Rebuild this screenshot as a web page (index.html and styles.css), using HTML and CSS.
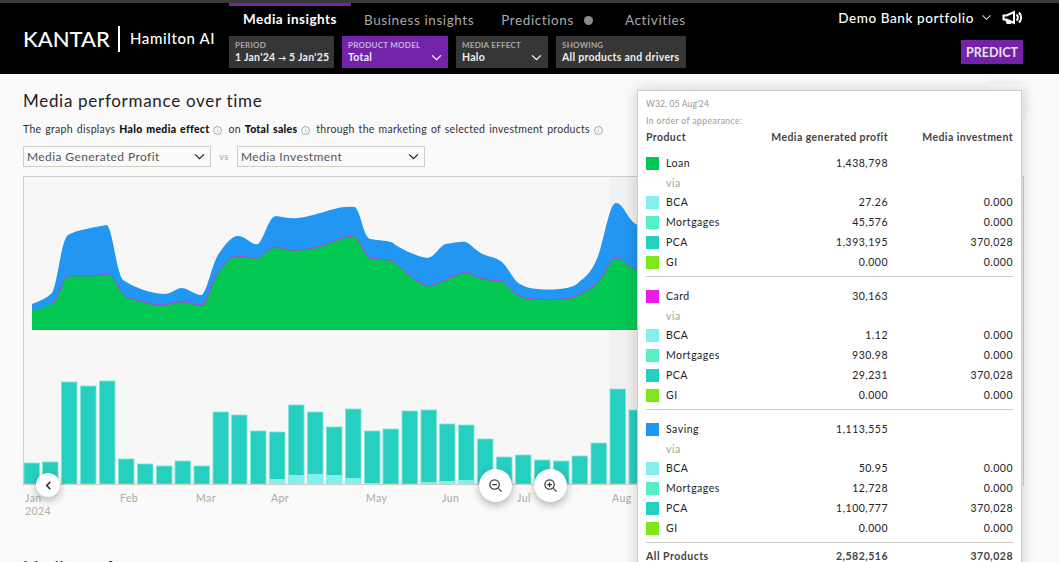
FILE: index.html
```html
<!DOCTYPE html>
<html lang="en">
<head>
<meta charset="utf-8">
<title>Hamilton AI</title>
<link rel="stylesheet" href="styles.css">
</head>
<body>
<header class="topbar">
  <div class="brand"><span class="kantar">KANTAR</span><span class="product">Hamilton AI</span></div>
  <div class="navcol">
    <nav class="tabs">
      <a class="tab active">Media insights</a>
      <a class="tab">Business insights</a>
      <a class="tab">Predictions<i class="dot"></i></a>
      <a class="tab">Activities</a>
    </nav>
    <div class="filters">
      <div class="filter f-period"><small>PERIOD</small><b>1 Jan'24 <span class="arrow">→</span> 5 Jan'25</b></div>
      <div class="filter f-model purple"><small>PRODUCT MODEL</small><b>Total</b><svg class="chev" viewBox="0 0 12 8"><path d="M1 1.5 6 6.5 11 1.5"/></svg></div>
      <div class="filter f-effect"><small>MEDIA EFFECT</small><b>Halo</b><svg class="chev" viewBox="0 0 12 8"><path d="M1 1.5 6 6.5 11 1.5"/></svg></div>
      <div class="filter f-show"><small>SHOWING</small><b>All products and drivers</b></div>
    </div>
  </div>
  <div class="rightcol">
    <div class="portfolio"><span>Demo Bank portfolio</span>
      <svg class="pchev" viewBox="0 0 12 8"><path d="M1.5 1.5 6 6 10.5 1.5"/></svg>
      <svg class="horn" viewBox="0 0 21 14"><path d="M1.500 5h3L12 1.500v11L4.500 9h-3z"/><path d="M4 9l1.500 3.500h2.500L7 10"/><path d="M14.500 4a4 4 0 0 1 0 6M17 2a7 7 0 0 1 0 10"/></svg>
    </div>
    <button class="predict">PREDICT</button>
  </div>
</header>

<main class="page">
  <h1>Media performance over time</h1>
  <p class="desc">The graph displays <b>Halo media effect</b><i class="info">i</i> on <b>Total sales</b><i class="info">i</i> through the marketing of selected investment products<i class="info">i</i></p>
  <div class="selects">
    <div class="select s1">Media Generated Profit<svg class="chev dark" viewBox="0 0 12 8"><path d="M1 1.5 6 6.5 11 1.5"/></svg></div>
    <span class="vs">vs</span>
    <div class="select s2">Media Investment<svg class="chev dark" viewBox="0 0 12 8"><path d="M1 1.5 6 6.5 11 1.5"/></svg></div>
  </div>

  <section class="chart">
    <svg class="plot" viewBox="23 176 1000 345" width="1000" height="345">
      <rect class="band" x="610" y="177" width="30" height="307"/>
      <path class="blue" d="M32 304C40 301 47 298 52 293C58 282 61 240 68 235C76 230 95 227 107 225C113 230 116 272 123 280C133 287 152 294 165 294C173 293 176 288 182 288C190 289 196 296 202 295C208 290 212 262 220 252C226 243 232 236 238 236C246 236 252 246 258 244C264 240 268 217 276 216C284 217 290 219 298 218C308 217 320 213 330 210C340 207 348 206 355 207C361 212 363 236 370 239C380 241 388 240 393 243C400 249 418 257 428 258C436 256 440 245 446 244C454 243 460 241 466 242C472 245 478 253 485 255C491 257 497 258 502 262C510 270 514 282 522 285C530 290 548 290 560 289C570 288 576 286 580 281C590 275 596 263 600 250C606 230 610 203 616 203C624 203 628 222 638 225L638 330L32 330Z"/>
      <path class="green" d="M32 310C40 309 47 307 52 303C60 297 62 277 68 276C76 275 98 277 108 274C116 277 120 293 126 297C136 300 155 306 165 305C172 304 176 301 182 302C190 302 196 306 202 305C208 302 212 280 220 270C226 262 230 256 238 256C246 256 252 259 258 258C264 255 270 247 276 247C284 248 290 251 298 250C310 250 320 246 330 243C338 239 348 236 355 236C361 240 364 256 370 258C380 260 388 259 393 261C400 266 418 285 428 286C436 286 450 276 466 272C472 274 478 279 485 279C491 281 497 280 502 281C508 285 514 295 522 297C530 300 550 300 565 299C575 298 590 290 600 280C606 272 610 258 616 258C624 258 628 268 638 269L638 330L32 330Z"/>
      <path class="mag" d="M52 303C60 297 62 277 68 276C76 275 98 277 108 274C116 277 120 293 126 297C136 300 155 306 165 305C172 304 176 301 182 302C190 302 196 306 202 305C208 302 212 280 220 270C226 262 230 256 238 256C246 256 252 259 258 258C264 255 270 247 276 247C284 248 290 251 298 250C310 250 320 246 330 243C338 239 348 236 355 236C361 240 364 256 370 258C380 260 388 259 393 261C400 266 418 285 428 286C436 286 450 276 466 272C472 274 478 279 485 279C491 281 497 280 502 281C508 285 514 295 522 297C530 300 550 300 565 299C575 298 590 290 600 280C606 272 610 258 616 258C624 258 628 268 638 269"/>
      <g class="bars">
        <rect x="24" y="463" width="15.5" height="21"/><rect x="42.5" y="462" width="15.5" height="22"/><rect x="61.5" y="382" width="15.5" height="102"/><rect x="80.5" y="386" width="15.5" height="98"/><rect x="99.5" y="381" width="15.5" height="103"/><rect x="118.5" y="459" width="15.5" height="25"/><rect x="137.5" y="464" width="15.5" height="20"/><rect x="156.5" y="466" width="15.5" height="18"/><rect x="175" y="461" width="15.5" height="23"/><rect x="194" y="466" width="15.5" height="18"/><rect x="213" y="412" width="15.5" height="72"/><rect x="231.5" y="415" width="15.5" height="69"/><rect x="250.5" y="431" width="15.5" height="53"/><rect x="269.5" y="432" width="15.5" height="52"/><rect x="288.5" y="405" width="15.5" height="79"/><rect x="307.5" y="412" width="15.5" height="72"/><rect x="326.5" y="427" width="15.5" height="57"/><rect x="345.5" y="409" width="15.5" height="75"/><rect x="364.5" y="431" width="15.5" height="53"/><rect x="383" y="429" width="15.5" height="55"/><rect x="402" y="411" width="15.5" height="73"/><rect x="421" y="410" width="15.5" height="74"/><rect x="439.5" y="424" width="15.5" height="60"/><rect x="458.5" y="425" width="15.5" height="59"/><rect x="477.5" y="439" width="15.5" height="45"/><rect x="496.5" y="457" width="15.5" height="27"/><rect x="515.5" y="455" width="15.5" height="29"/><rect x="534.5" y="460" width="15.5" height="24"/><rect x="553.5" y="461" width="15.5" height="23"/><rect x="572" y="456" width="15.5" height="28"/><rect x="591" y="443" width="15.5" height="41"/><rect x="610" y="389" width="15.5" height="95"/><rect x="629" y="410" width="15.5" height="74"/>
      </g>
      <g class="lights">
        <rect x="269.5" y="479" width="15.5" height="5"/><rect x="288.5" y="475" width="15.5" height="9"/><rect x="307.5" y="474" width="15.5" height="10"/><rect x="326.5" y="475" width="15.5" height="9"/><rect x="345.5" y="478" width="15.5" height="6"/><rect x="364.5" y="483" width="15.5" height="1"/><rect x="421" y="482" width="15.5" height="2"/><rect x="439.5" y="481" width="15.5" height="3"/><rect x="458.5" y="480" width="15.5" height="4"/>
      </g>
      <line class="axis" x1="23" y1="484.5" x2="1022" y2="484.5"/>
      <g class="months">
        <text x="25" y="502">Jan</text><text x="25" y="515">2024</text><text x="120" y="502">Feb</text><text x="196" y="502">Mar</text><text x="271" y="502">Apr</text><text x="366" y="502">May</text><text x="442" y="502">Jun</text><text x="517" y="502">Jul</text><text x="612" y="502">Aug</text>
      </g>
    </svg>
    <button class="round r-back"><svg viewBox="0 0 10 12"><path d="M7 2 3 6l4 4"/></svg></button>
    <button class="round r-out"><svg viewBox="0 0 16 16"><circle cx="7" cy="7" r="5"/><path d="M4.500 7h5M11 11l3.500 3.500"/></svg></button>
    <button class="round r-in"><svg viewBox="0 0 16 16"><circle cx="7" cy="7" r="5"/><path d="M4.500 7h5M7 4.500v5M11 11l3.500 3.500"/></svg></button>
  </section>

  <h2 class="next">Media performance</h2>
</main>

<div class="ghost"></div>

<aside class="tip">
  <div class="tip-date">W32, 05 Aug'24</div>
  <div class="tip-note">In order of appearance:</div>
  <div class="row head"><span class="name">Product</span><span>Media generated profit</span><span>Media investment</span></div>

  <div class="group">
    <div class="row parent"><span class="name"><i class="sw loan"></i>Loan</span><span>1,438,798</span><span></span></div>
    <div class="via">via</div>
    <div class="row"><span class="name"><i class="sw bca"></i>BCA</span><span>27.26</span><span>0.000</span></div>
    <div class="row"><span class="name"><i class="sw mort"></i>Mortgages</span><span>45,576</span><span>0.000</span></div>
    <div class="row"><span class="name"><i class="sw pca"></i>PCA</span><span>1,393,195</span><span>370,028</span></div>
    <div class="row"><span class="name"><i class="sw gi"></i>GI</span><span>0.000</span><span>0.000</span></div>
  </div>
  <div class="group">
    <div class="row parent"><span class="name"><i class="sw card"></i>Card</span><span>30,163</span><span></span></div>
    <div class="via">via</div>
    <div class="row"><span class="name"><i class="sw bca"></i>BCA</span><span>1.12</span><span>0.000</span></div>
    <div class="row"><span class="name"><i class="sw mort"></i>Mortgages</span><span>930.98</span><span>0.000</span></div>
    <div class="row"><span class="name"><i class="sw pca"></i>PCA</span><span>29,231</span><span>370,028</span></div>
    <div class="row"><span class="name"><i class="sw gi"></i>GI</span><span>0.000</span><span>0.000</span></div>
  </div>
  <div class="group">
    <div class="row parent"><span class="name"><i class="sw saving"></i>Saving</span><span>1,113,555</span><span></span></div>
    <div class="via">via</div>
    <div class="row"><span class="name"><i class="sw bca"></i>BCA</span><span>50.95</span><span>0.000</span></div>
    <div class="row"><span class="name"><i class="sw mort"></i>Mortgages</span><span>12,728</span><span>0.000</span></div>
    <div class="row"><span class="name"><i class="sw pca"></i>PCA</span><span>1,100,777</span><span>370,028</span></div>
    <div class="row"><span class="name"><i class="sw gi"></i>GI</span><span>0.000</span><span>0.000</span></div>
  </div>
  <div class="row total"><span class="name">All Products</span><span>2,582,516</span><span>370,028</span></div>
</aside>
</body>
</html>
```
FILE: styles.css
```css
* { box-sizing: border-box; }
html, body { margin: 0; height: 100%; overflow: hidden; }
body { background: #fafafa; font-family: "Lato", "Open Sans", sans-serif; color: #222; position: relative; }

.topbar { height: 74px; background: #000; border-top: 3px solid #3a3a3a; display: flex; color: #fff; }
.brand { width: 229px; padding: 22px 0 0 23px; display: flex; align-items: flex-start; }
.kantar { font-size: 22px; line-height: 26px; letter-spacing: 0; font-weight: 500; width: 97px; margin-top: 1px; height: 26px; border-right: 2px solid #fff; }
.product { font-size: 15px; line-height: 26px; padding-left: 10px; letter-spacing: 0.6px; font-weight: 500; }

.navcol { width: 600px; }
.tabs { display: flex; height: 33px; }
.tab { font-size: 13.5px; letter-spacing: 0.6px; color: #a9a9a9; padding: 1px 0 0; line-height: 20px; margin-left: 13px; display: flex; align-items: center; height: 33px; }
.tab.active { color: #fff; font-weight: 700; width: 122px; margin-left: 0; justify-content: center; border-top: 3px solid #7323a8; padding-top: 0; padding-bottom: 4px; letter-spacing: .5px; }
.tab:nth-child(3) { margin-left: 27px; }
.dot { width: 9px; height: 9px; border-radius: 50%; background: #8a8a8a; margin-left: 10px; }
.tab:last-child { margin-left: 32px; }

.filters { display: flex; gap: 8px; }
.filter { position: relative; height: 32px; background: #363636; padding: 4px 6px 0 6px; display: flex; flex-direction: column; }
.filter small { font-size: 8px; line-height: 11px; font-weight: 700; color: #a8a8a8; letter-spacing: 0.25px; }
.filter b { font-size: 10.5px; line-height: 13px; font-weight: 700; color: #eee; letter-spacing: 0.28px; white-space: nowrap; }
.arrow { font-size: 8px; letter-spacing: 0; }
.f-period { width: 105px; }
.f-model { width: 106px; }
.f-effect { width: 92px; }
.f-show { width: 130px; }
.purple { background: #7323a8; }
.purple small { color: #cdb0e2; }
.chev { position: absolute; right: 6px; bottom: 7px; width: 11px; height: 7px; fill: none; stroke: #fff; stroke-width: 1.4; }
.chev.dark { stroke: #222; right: 5px; bottom: 6px; }

.rightcol { flex: 1; padding-right: 36px; display: flex; flex-direction: column; align-items: flex-end; }
.portfolio { display: flex; align-items: center; height: 29px; font-size: 13.5px; letter-spacing: 0.6px; font-weight: 500; }
.pchev { width: 11px; height: 7px; margin-left: 7px; margin-right: 2px; fill: none; stroke: #ddd; stroke-width: 1.2; }
.horn { width: 21px; height: 15px; margin-left: 8px; fill: none; stroke: #fff; stroke-width: 2; }
.predict { margin-top: 8px; width: 62px; height: 24px; border: 0; padding: 0; background: #7323a8; color: #e8e0ee; font: 700 12.5px "Lato", sans-serif; }

.page { padding: 16px 0 0 23px; }
h1 { margin: 0; font-size: 17px; line-height: 22px; font-weight: 400; letter-spacing: 0.7px; color: #222; }
.desc { margin: 10px 0 0; font-size: 10.5px; line-height: 14px; letter-spacing: 0.28px; color: #333; word-spacing: 1px; }
.desc b { color: #111; font-weight: 900; }
.info { display: inline-block; width: 9px; height: 9px; margin: 0 2px 0 4px; border: 1px solid #a9a99f; border-radius: 50%; font-size: 6px; line-height: 7px; text-align: center; color: #a9a99f; font-style: normal; }
.selects { display: flex; align-items: center; margin-top: 10px; height: 21px; }
.select { position: relative; height: 21px; background: #fafafa; border: 1px solid #d0cfc4; font-size: 12px; line-height: 19px; padding-left: 3px; letter-spacing: 0.4px; color: #555; }
.s1 { width: 188px; }
.s2 { width: 188px; }
.vs { width: 26px; text-align: center; font-size: 9px; color: #a3a397; letter-spacing: 0.4px; }

.chart { position: relative; margin-top: 9px; width: 1000px; height: 345px; }
.plot { display: block; }
.chart::before { content: ""; position: absolute; left: 0; top: 0; width: 999px; height: 309px; background: #f7f7f7; border: 1px solid #d0cfc4; border-bottom: 0; z-index: -1; }
.band { fill: #000; opacity: .025; }
.blue { fill: #2196f3; }
.green { fill: #02c853; }
.mag { fill: none; stroke: #e81ee6; stroke-width: 1; opacity: .85; }
.bars rect { fill: #27cfc0; stroke: #7fe6da; stroke-width: .8; }
.lights rect { fill: #85efed; }
.axis { stroke: #d0cfc4; stroke-width: 1; }
.months text { font-size: 10.5px; font-weight: 500; fill: #b0b0a2; font-family: "Lato", sans-serif; letter-spacing: .4px; }

.round { position: absolute; padding: 0; border: 0; border-radius: 50%; background: #fff; box-shadow: 0 3px 8px rgba(0,0,0,.3); display: flex; align-items: center; justify-content: center; }
.round svg { fill: none; stroke: #333; width: 15px; height: 15px; stroke-width: 1.3; }
.r-back { left: 13px; top: 297px; width: 24px; height: 24px; }
.r-back svg { width: 9px; height: 11px; stroke-width: 1.8; }
.r-out { left: 456px; top: 293px; width: 33px; height: 33px; }
.r-in { left: 511px; top: 293px; width: 33px; height: 33px; }

.next { margin: 36px 0 0; font-size: 17px; line-height: 22px; font-weight: 400; letter-spacing: .85px; }

.ghost { position: absolute; left: 989px; top: 84px; width: 34px; height: 33px; background: #fcfcfc; box-shadow: 0 2px 12px rgba(0,0,0,.08); }

.tip { position: absolute; left: 637px; top: 90px; width: 385px; height: 500px; background: #fff; border: 1px solid #cfcfc8; box-shadow: 0 0 14px rgba(0,0,0,.18); padding: 7px 8px 0; font-size: 10.5px; color: #222; }
.tip-date { font-size: 8.5px; line-height: 12px; color: #99998c; letter-spacing: .15px; }
.tip-note { font-size: 8.5px; line-height: 12px; margin-top: 5px; color: #99998c; letter-spacing: .45px; }
.row { display: grid; grid-template-columns: 1fr 125px 125px; height: 20px; line-height: 20px; letter-spacing: .5px; }
.row span { text-align: right; white-space: nowrap; }
.row .name { text-align: left; display: flex; align-items: center; }
.head { font-weight: 700; color: #444; height: 18px; line-height: 18px; margin-top: 1px; letter-spacing: .42px; }
.group { border-bottom: 1px solid #d0cfc4; padding: 9px 0 4px; }
.head + .group { padding-top: 7px; }
.via { height: 19px; line-height: 20px; padding-left: 20px; color: #a3a397; letter-spacing: .5px; }
.sw { width: 13px; height: 13px; margin-right: 7px; flex: none; }
.loan { background: #02c853; }
.card { background: #e81ee6; }
.saving { background: #2196f3; }
.bca { background: #85efed; }
.mort { background: #55f0c4; }
.pca { background: #25d0c2; }
.gi { background: #7ee61a; }
.total { font-weight: 700; color: #444; height: 20px; line-height: 20px; margin-top: 3px; }
```
